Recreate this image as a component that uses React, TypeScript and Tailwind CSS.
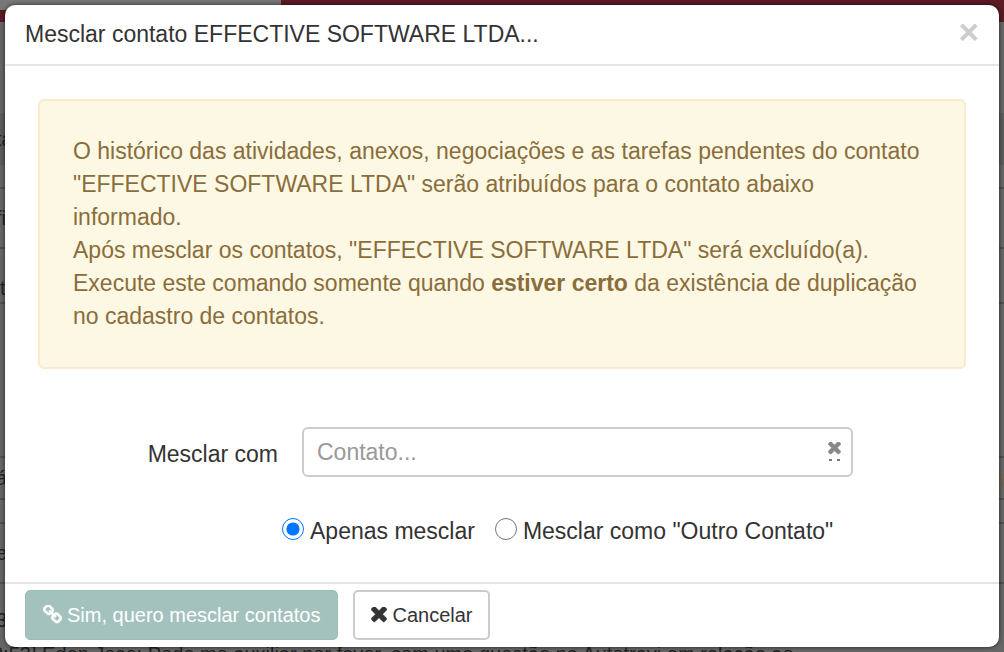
import { useState } from "react";

const TimesIcon = ({ className }: { className?: string }) => (
  <svg
    viewBox="280 302 1232 1232"
    fill="currentColor"
    stroke="currentColor"
    strokeWidth="44"
    className={className}
    aria-hidden="true"
  >
    <path d="M1490 1216q0 40-28 68l-136 136q-28 28-68 28t-68-28l-294-294-294 294q-28 28-68 28t-68-28l-136-136q-28-28-28-68t28-68l294-294-294-294q-28-28-28-68t28-68l136-136q28-28 68-28t68 28l294 294 294-294q28-28 68-28t68 28l136 136q28 28 28 68t-28 68l-294 294 294 294q28 28 28 68z" />
  </svg>
);

const LinkIcon = ({ className }: { className?: string }) => (
  <svg
    viewBox="64 64 1664 1664"
    fill="currentColor"
    stroke="currentColor"
    strokeWidth="50"
    className={className}
    aria-hidden="true"
  >
    <path d="M1520 1216q0-40-28-68l-208-208q-28-28-68-28-42 0-72 32 3 3 19 18.5t21.5 21.5 15 19 13 25.5 3.5 27.5q0 40-28 68t-68 28q-15 0-27.5-3.5t-25.5-13-19-15-21.5-21.5-18.5-19q-33 31-33 73 0 40 28 68l206 207q27 27 68 27 40 0 68-26l147-146q28-28 28-67zm-703-705q0-40-28-68l-206-207q-28-28-68-28-39 0-68 27l-147 146q-28 28-28 67 0 40 28 68l208 208q27 27 68 27 42 0 72-31-3-3-19-18.5t-21.5-21.5-15-19-13-25.5-3.5-27.5q0-40 28-68t68-28q15 0 27.5 3.5t25.5 13 19 15 21.5 21.5 18.5 19q33-31 33-73zm895 705q0 120-85 203l-147 146q-83 83-203 83-121 0-204-85l-206-207q-83-83-83-203 0-123 88-209l-88-88q-86 88-208 88-120 0-204-84l-208-208q-84-84-84-204t85-203l147-146q83-83 203-83 121 0 204 85l206 207q83 83 83 203 0 123-88 209l88 88q86-88 208-88 120 0 204 84l208 208q84 84 84 204z" />
  </svg>
);

// Page dimmed behind the dialog
const Backdrop = () => (
  <div
    className="absolute inset-0 flex flex-col overflow-hidden bg-[#666] text-xl text-[#222]"
    aria-hidden="true"
  >
    <div className="flex h-[22px] shrink-0 bg-[#5b1a24]">
      <div className="h-2.5 w-[28%] bg-[#777]" />
    </div>
    <div className="h-[91px] shrink-0" />
    <div className="-ml-1 flex h-[52px] shrink-0 items-center bg-[#5c5c5c]">ta</div>
    <div className="h-6 shrink-0 border-b-2 border-[#505050]" />
    <div className="-ml-1 flex h-[60px] shrink-0 items-center border-b-2 border-[#505050]">fi</div>
    <div className="flex h-[55px] shrink-0 items-end border-b-2 border-[#505050]">t</div>
    <div className="h-[154px] shrink-0 border-b-2 border-[#505050]" />
    <div className="-ml-1 flex h-[42px] shrink-0 items-center justify-between border-b-2 border-[#505050]">
      <span>á</span>
      <svg viewBox="0 0 24 24" className="-mr-3 size-5" fill="none" stroke="#6f6443" strokeWidth="2">
        <path d="M12 2l3 7 7 .5-5.500 4.500 2 7.500-6.500-4-6.500 4 2-7.500L2 9.500 9 9z" />
      </svg>
    </div>
    <div className="h-6 shrink-0 border-b-2 border-[#505050]" />
    <div className="-ml-1 flex h-[60px] shrink-0 items-center border-b-2 border-[#505050]">e</div>
    <div className="-ml-1 flex h-[58px] shrink-0 items-end pb-2">3</div>
    <p className="-ml-2 shrink-0 leading-6 whitespace-nowrap">
      2:53] Eden Jose: Pode me auxiliar por favor, com uma questão na Autotravi em relação ao
    </p>
  </div>
);

const App = () => {
  const [contact, setContact] = useState("");
  const [mode, setMode] = useState("merge");

  return (
    <div className="relative min-h-screen overflow-hidden p-[5px] font-['Liberation_Sans',Arial,sans-serif] text-[23px] text-[#333]">
      <Backdrop />
      <div
        role="dialog"
        aria-labelledby="merge-title"
        className="relative rounded-[10px] bg-white shadow-[0_0_4px_#000a]"
      >
        <header className="flex h-[61px] items-center justify-between border-b-2 border-[#e5e5e5] px-5">
          <h4 id="merge-title">Mesclar contato EFFECTIVE SOFTWARE LTDA...</h4>
          <button
            type="button"
            aria-label="Fechar"
            className="pb-1.5 text-[35px] leading-8 font-bold text-[#ccc]"
          >
            ×
          </button>
        </header>

        <div className="px-[33px] pt-[33px] pb-[33px]">
          <div className="rounded-md border-2 border-[#faebcc] bg-[#fcf8e3] pt-[34px] pr-10 pb-[34px] pl-[33px] leading-[33px] text-[#8a6d3b]">
            <p>
              O histórico das atividades, anexos, negociações e as tarefas pendentes do contato
              "EFFECTIVE SOFTWARE LTDA" serão atribuídos para o contato abaixo informado.
            </p>
            <p>Após mesclar os contatos, "EFFECTIVE SOFTWARE LTDA" será excluído(a).</p>
            <p>
              Execute este comando somente quando <strong>estiver certo</strong> da existência de
              duplicação no cadastro de contatos.
            </p>
          </div>

          <div className="mt-[58px] flex items-center gap-6 pr-[113px]">
            <label htmlFor="contact" className="w-60 pt-1 text-right">
              Mesclar com
            </label>
            <div className="relative flex-1">
              <input
                id="contact"
                type="text"
                placeholder="Contato..."
                value={contact}
                onChange={(e) => setContact(e.target.value)}
                className="h-[50px] w-full rounded-md border-2 border-[#ccc] bg-white pr-10 pl-[13px] placeholder:text-[#999]"
              />
              <button
                type="button"
                aria-label="Limpar"
                onClick={() => setContact("")}
                className="absolute top-[15px] right-3 flex flex-col items-center gap-1 text-[#888]"
              >
                <TimesIcon className="size-[13px]" />
                <span className="flex gap-[5px]">
                  <span className="h-0.5 w-[3px] bg-[#777]" />
                  <span className="h-0.5 w-[3px] bg-[#777]" />
                </span>
              </button>
            </div>
          </div>

          <div className="mt-[37px] flex items-center gap-5 pl-[244px]">
            <label className="flex items-center gap-1.5">
              <input
                type="radio"
                name="mode"
                checked={mode === "merge"}
                onChange={() => setMode("merge")}
                className="mb-1 size-[22px] accent-[#0075ff]"
              />
              Apenas mesclar
            </label>
            <label className="flex items-center gap-1.5">
              <input
                type="radio"
                name="mode"
                checked={mode === "other"}
                onChange={() => setMode("other")}
                className="mb-1 size-[22px] accent-[#0075ff]"
              />
              Mesclar como "Outro Contato"
            </label>
          </div>
        </div>

        <footer className="flex gap-[15px] border-t-2 border-[#e5e5e5] px-5 pt-1.5 pb-[7px] text-xl">
          <button
            type="button"
            className="flex h-[50px] items-center gap-[5px] rounded-[5px] border border-[#9abdb7] bg-[#a4c2bd] px-[17px] text-white"
          >
            <LinkIcon className="size-[19px]" />
            Sim, quero mesclar contatos
          </button>
          <button
            type="button"
            className="flex h-[50px] items-center gap-[5px] rounded-[5px] border-2 border-[#ccc] bg-white px-4"
          >
            <TimesIcon className="size-4" />
            Cancelar
          </button>
        </footer>
      </div>
    </div>
  );
};

export default App;
